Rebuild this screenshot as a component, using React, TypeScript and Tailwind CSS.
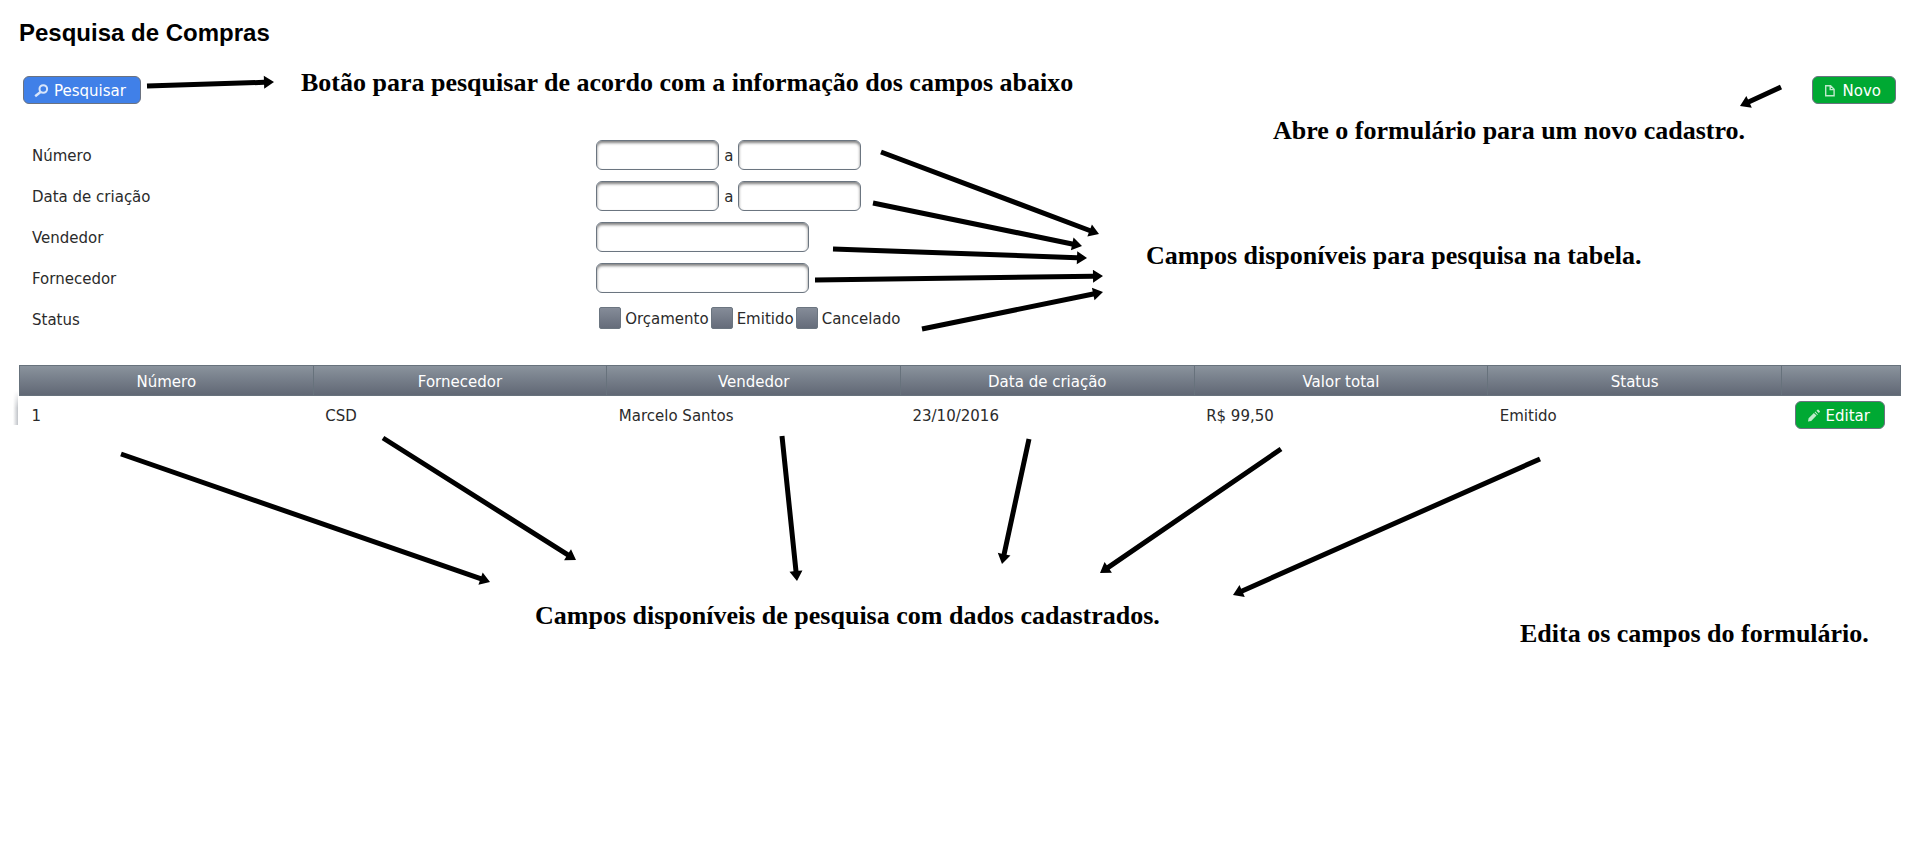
import type { ReactNode } from 'react';

type Arrow = { from: [number, number]; to: [number, number] };

const arrows: Arrow[] = [
  { from: [147, 86], to: [274, 82] },
  { from: [1781, 87], to: [1740, 106] },
  { from: [881, 152], to: [1099, 234] },
  { from: [873, 203], to: [1082, 246] },
  { from: [833, 249], to: [1087, 258] },
  { from: [815, 280], to: [1103, 276] },
  { from: [922, 329], to: [1103, 292] },
  { from: [121, 454], to: [490, 582] },
  { from: [383, 438], to: [576, 560] },
  { from: [782, 436], to: [797, 581] },
  { from: [1029, 439], to: [1002, 564] },
  { from: [1281, 449], to: [1100, 573] },
  { from: [1540, 459], to: [1233, 595] },
];

const columns = ['Número', 'Fornecedor', 'Vendedor', 'Data de criação', 'Valor total', 'Status'];
const rows = [['1', 'CSD', 'Marcelo Santos', '23/10/2016', 'R$ 99,50', 'Emitido']];

function SearchIcon() {
  return (
    <svg className="h-4 w-4 opacity-80" viewBox="0 0 16 16" fill="none" stroke="white" strokeWidth="2" aria-hidden="true">
      <circle cx="9.3" cy="6" r="3.8" />
      <path d="M6.500 9 1.200 13.200" strokeWidth="2.4" />
    </svg>
  );
}

function DocumentIcon() {
  return (
    <svg className="h-4 w-4 opacity-75" viewBox="0 0 16 16" fill="none" stroke="white" strokeWidth="1.4" aria-hidden="true">
      <path d="M2.700 2.700h4.900l3.500 3.500v6.600H2.700zM7.200 3v3.600h3.700" />
    </svg>
  );
}

function PencilIcon() {
  return (
    <svg className="h-4 w-4 opacity-75" viewBox="0 0 16 16" fill="white" aria-hidden="true">
      <path d="M2 13.500l.6-3.200L7.900 5l2.600 2.600L5.200 12.900zM8.600 4.300l.7-.7 2.600 2.600-.7.7zM10.400 2.700l1-1q.6-.4 1.200.1l1.100 1.100q.5.600.1 1.200l-1 1z" />
    </svg>
  );
}

function ActionButton({ icon, color, children }: { icon: ReactNode; color: string; children: ReactNode }) {
  return (
    <button
      type="button"
      className={`inline-flex h-7 items-center gap-1 rounded-md border border-[#6b7280] pt-0.5 pr-3.5 pl-2.5 text-[15px] leading-6 text-white ${color}`}
    >
      {icon}
      {children}
    </button>
  );
}

function Field({ label, wide = false }: { label: string; wide?: boolean }) {
  return (
    <input
      type="text"
      aria-label={label}
      className={`h-[30px] rounded-md border border-[#6b7580] bg-white px-2 shadow-[inset_0_2px_3px_#808080] ${wide ? 'w-[213px]' : 'w-[123px]'}`}
    />
  );
}

function FormRow({ label, children }: { label: string; children: ReactNode }) {
  return (
    <div className="grid h-[41px] grid-cols-[23fr_52fr] items-center">
      <span className="pt-0.5 pl-[13px]">{label}</span>
      <div className="flex items-center">{children}</div>
    </div>
  );
}

function Range({ label }: { label: string }) {
  return (
    <div className="flex items-center gap-[5px]">
      <Field label={`${label} inicial`} />
      <span className="pt-0.5">a</span>
      <Field label={`${label} final`} />
    </div>
  );
}

function Note({ place, children }: { place: string; children: ReactNode }) {
  return (
    <p className={`absolute font-['Liberation_Serif',serif] text-[26px] leading-7 font-bold whitespace-nowrap text-black ${place}`}>
      {children}
    </p>
  );
}

function ArrowShape({ from, to }: Arrow) {
  const dx = to[0] - from[0];
  const dy = to[1] - from[1];
  const length = Math.hypot(dx, dy);
  const angle = (Math.atan2(dy, dx) * 180) / Math.PI;
  const neck = length - 10;
  return (
    <path
      transform={`translate(${from[0]} ${from[1]}) rotate(${angle})`}
      d={`M0-2.500H${neck}V-6.500L${length} 0L${neck} 6.500V2.500H0Z`}
    />
  );
}

export default function App() {
  return (
    <main className="relative min-h-screen overflow-hidden bg-white px-[19px] pt-4 font-['DejaVu_Sans',sans-serif] text-[15px] leading-6 text-[#2b2b2b]">
      <h1 className="font-['Liberation_Sans',sans-serif] text-2xl leading-[34px] font-bold text-black">Pesquisa de Compras</h1>

      <div className="mt-[26px] flex justify-between pr-[5px] pl-1">
        <ActionButton icon={<SearchIcon />} color="bg-[#4080e8]">Pesquisar</ActionButton>
        <ActionButton icon={<DocumentIcon />} color="bg-[#00a933]">Novo</ActionButton>
      </div>

      <form className="mt-[30px]">
        <FormRow label="Número"><Range label="Número" /></FormRow>
        <FormRow label="Data de criação"><Range label="Data de criação" /></FormRow>
        <FormRow label="Vendedor"><Field label="Vendedor" wide /></FormRow>
        <FormRow label="Fornecedor"><Field label="Fornecedor" wide /></FormRow>
        <FormRow label="Status">
          <div className="flex gap-0.5 pl-[3px]">
            {['Orçamento', 'Emitido', 'Cancelado'].map((status) => (
              <label key={status} className="flex items-start gap-1">
                <input
                  type="checkbox"
                  className="h-[22px] w-[22px] appearance-none rounded-xs border border-[#6b7580] bg-linear-to-b from-[#858c98] to-[#656c7a]"
                />
                <span>{status}</span>
              </label>
            ))}
          </div>
        </FormRow>
      </form>

      <div className="relative mt-[26px]">
        <div className="absolute top-[26px] -left-[6px] h-[34px] w-[5px] bg-linear-to-r from-white to-[#c0c3c8] mask-t-from-50%" />
        <table className="w-full table-fixed border-collapse">
          <thead>
            <tr className="h-[30px] bg-linear-to-b from-[#8a939d] to-[#5f6673] text-white">
              {columns.map((column) => (
                <th key={column} className="border border-[#67727c] px-0 pt-0.5 pb-0 font-normal">{column}</th>
              ))}
              <th className="w-[119px] border border-[#67727c] p-0" aria-label="Ações" />
            </tr>
          </thead>
          <tbody>
            {rows.map((row) => (
              <tr key={row[0]} className="h-[38px]">
                {row.map((cell) => (
                  <td key={cell} className="px-3 pt-0.5 pb-0">{cell}</td>
                ))}
                <td className="px-[13px] py-0">
                  <div className="flex"><ActionButton icon={<PencilIcon />} color="bg-[#00a933]">Editar</ActionButton></div>
                </td>
              </tr>
            ))}
          </tbody>
        </table>
      </div>

      <svg className="pointer-events-none absolute top-0 left-0 h-[854px] w-[1920px]" viewBox="0 0 1920 854" aria-hidden="true">
        {arrows.map((arrow) => (
          <ArrowShape key={arrow.from.join()} {...arrow} />
        ))}
      </svg>
      <Note place="top-[69px] left-[301px]">Botão para pesquisar de acordo com a informação dos campos abaixo</Note>
      <Note place="top-[117px] left-[1273px]">Abre o formulário para um novo cadastro.</Note>
      <Note place="top-[242px] left-[1146px]">Campos disponíveis para pesquisa na tabela.</Note>
      <Note place="top-[602px] left-[535px]">Campos disponíveis de pesquisa com dados cadastrados.</Note>
      <Note place="top-[620px] left-[1520px]">Edita os campos do formulário.</Note>
    </main>
  );
}
